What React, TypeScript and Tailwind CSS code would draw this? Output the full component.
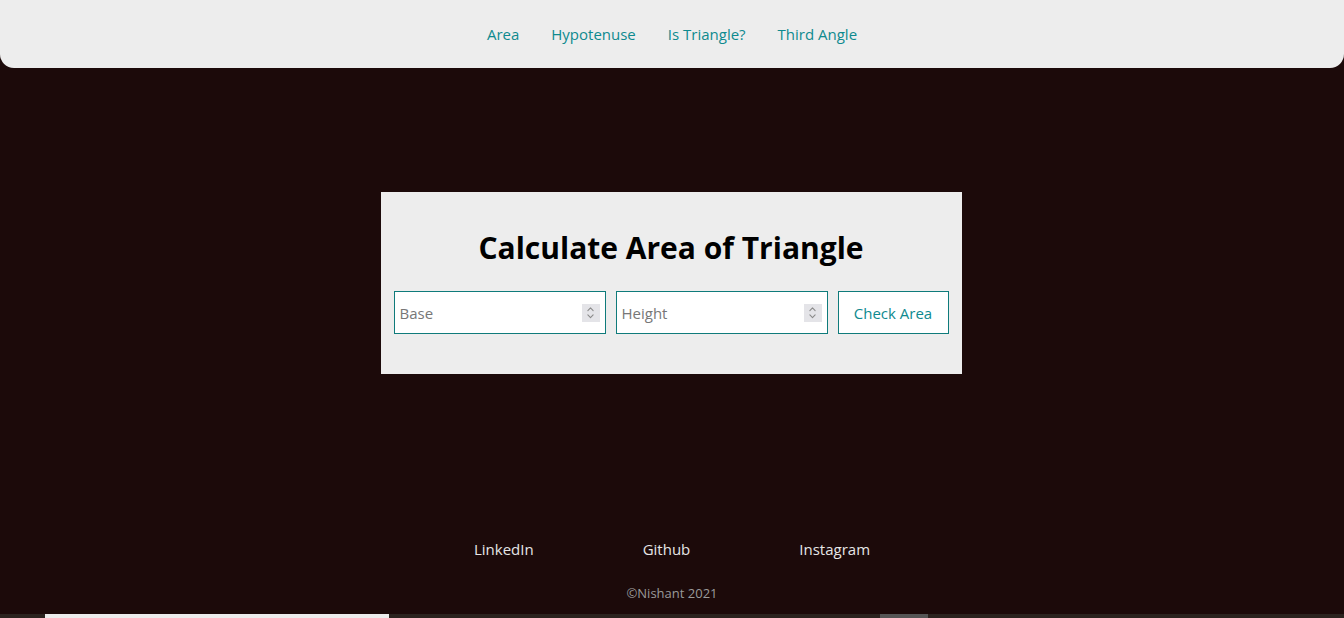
import { ChevronDown, ChevronUp } from 'lucide-react'

const font = { fontFamily: '"Open Sans", "Noto Sans", sans-serif' }

const navLinks = ['Area', 'Hypotenuse', 'Is Triangle?', 'Third Angle']
const socials = ['LinkedIn', 'Github', 'Instagram']

function NumberField({ placeholder }: { placeholder: string }) {
  return (
    <div className="flex h-[43px] w-[212px] items-center border border-[#0f7b7b] bg-white pr-[5px]">
      <input
        placeholder={placeholder}
        className="h-full min-w-0 flex-1 bg-transparent pl-[5px] text-[15px] text-neutral-800 placeholder:text-[#777] focus:outline-none"
      />
      <div className="flex h-[18px] w-[18px] flex-col items-center justify-center bg-[#e4e4e8] text-[#8a8a8a]">
        <ChevronUp className="-mb-[3px] h-[11px] w-[11px]" strokeWidth={2.5} />
        <ChevronDown className="h-[11px] w-[11px]" strokeWidth={2.5} />
      </div>
    </div>
  )
}

export default function App() {
  return (
    <div style={font} className="flex h-[618px] flex-col bg-[#1c0a0a]">
      <nav className="flex h-[68px] items-center justify-center gap-[32px] rounded-b-[14px] bg-[#ededed] text-[15px] text-[#0e8a8f]">
        {navLinks.map((l) => (
          <a key={l} href="#" className="leading-none">{l}</a>
        ))}
      </nav>

      <main className="flex flex-1 justify-center pt-[124px]">
        <div className="mr-[2px] h-[182px] w-[581px] bg-[#ededed] px-[13px]">
          <h1 className="mt-[36px] text-center text-[30px] font-bold leading-[40px] text-black">Calculate Area of Triangle</h1>
          <div className="mt-[23px] flex gap-[10px]">
            <NumberField placeholder="Base" />
            <NumberField placeholder="Height" />
            <button className="h-[43px] w-[111px] border border-[#0f7b7b] bg-white pt-[1px] text-[15px] text-[#0e8a8f]">Check Area</button>
          </div>
        </div>
      </main>

      <footer className="pb-[11px] text-center">
        <div className="flex justify-center gap-[109px] text-[15px] text-[#e6e6e6]">
          {socials.map((s) => (
            <a key={s} href="#">{s}</a>
          ))}
        </div>
        <p className="mt-[23px] text-[13px] text-[#9a9a9a]">©Nishant 2021</p>
      </footer>

      <div className="flex h-[4px] bg-[#2b231f]">
        <div className="ml-[45px] w-[344px] bg-[#ececec]" />
        <div className="ml-[491px] w-[48px] bg-[#555]" />
      </div>
    </div>
  )
}
